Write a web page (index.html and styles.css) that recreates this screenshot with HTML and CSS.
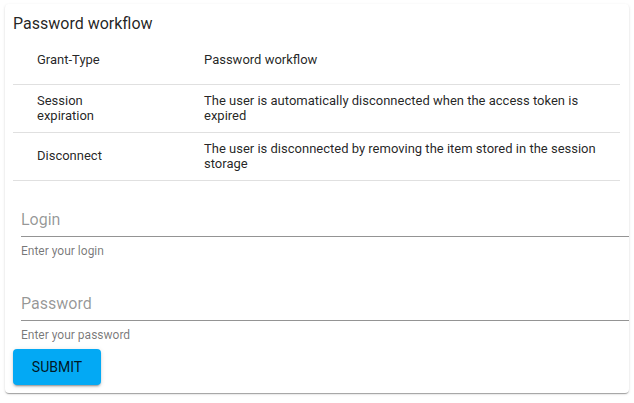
FILE: index.html
```html
<!DOCTYPE html>
<html lang="en">
<head>
<meta charset="utf-8">
<title>Password workflow</title>
<link rel="stylesheet" href="styles.css">
</head>
<body>
<div class="card">
  <div class="title">Password workflow</div>
  <div class="table">
    <div class="row">
      <div class="key"><span>Grant-Type</span></div>
      <div class="val">Password workflow</div>
    </div>
    <div class="row">
      <div class="key"><span class="narrow">Session expiration</span></div>
      <div class="val">The user is automatically disconnected when the access token is expired</div>
    </div>
    <div class="row">
      <div class="key"><span>Disconnect</span></div>
      <div class="val">The user is disconnected by removing the item stored in the session storage</div>
    </div>
  </div>
  <form class="form">
    <div class="field first">
      <div class="input">Login</div>
      <div class="hint">Enter your login</div>
    </div>
    <div class="field">
      <div class="input">Password</div>
      <div class="hint">Enter your password</div>
    </div>
    <button type="button" class="submit">SUBMIT</button>
  </form>
</div>
</body>
</html>
```
FILE: styles.css
```css
html, body {
  margin: 0;
  padding: 0;
  background: #ffffff;
}
body {
  font-family: Roboto, "Liberation Sans", sans-serif;
  color: rgba(0, 0, 0, 0.87);
}
.card {
  margin: 4px 5px;
  width: 624px;
  box-sizing: border-box;
  padding: 8px;
  background: #fff;
  border-radius: 4px;
  box-shadow: 0 2px 1px -1px rgba(0,0,0,.2), 0 1px 1px 0 rgba(0,0,0,.14), 0 1px 3px 0 rgba(0,0,0,.12);
}
.title {
  font-size: 16px;
  line-height: 20px;
  padding-top: 2px;
  margin-bottom: 3px;
}
.table {
  width: 607px;
}
.row {
  display: grid;
  grid-template-columns: 191px 1fr;
  height: 48px;
  padding-bottom: 2px;
  border-bottom: 1px solid #e0e0e0;
  box-sizing: border-box;
  align-items: center;
  font-size: 13px;
  line-height: 15px;
}
.key {
  padding-left: 24px;
}
.narrow {
  display: block;
  width: 80px;
}
.val {
  padding-right: 24px;
}
.form {
  margin: 0;
  padding-top: 27px;
}
.field {
  margin-left: 8px;
  width: 100%;
}
.field + .field {
  margin-top: 34px;
}
.input {
  font-size: 16px;
  line-height: 24px;
  padding-bottom: 4px;
  border-bottom: 1px solid rgba(0, 0, 0, 0.42);
  color: rgba(0, 0, 0, 0.42);
}
.hint {
  margin-top: 7px;
  font-size: 12px;
  line-height: 14px;
  color: rgba(0, 0, 0, 0.54);
}
.submit {
  display: block;
  margin-top: 7px;
  width: 88px;
  height: 36px;
  border: 0;
  border-radius: 4px;
  background: #03a9f4;
  color: rgba(0, 0, 0, 0.87);
  font-family: Roboto, "Liberation Sans", sans-serif;
  font-size: 14px;
  font-weight: 400;
  padding: 0;
  box-shadow: 0 3px 1px -2px rgba(0,0,0,.2), 0 2px 2px 0 rgba(0,0,0,.14), 0 1px 5px 0 rgba(0,0,0,.12);
}
```
